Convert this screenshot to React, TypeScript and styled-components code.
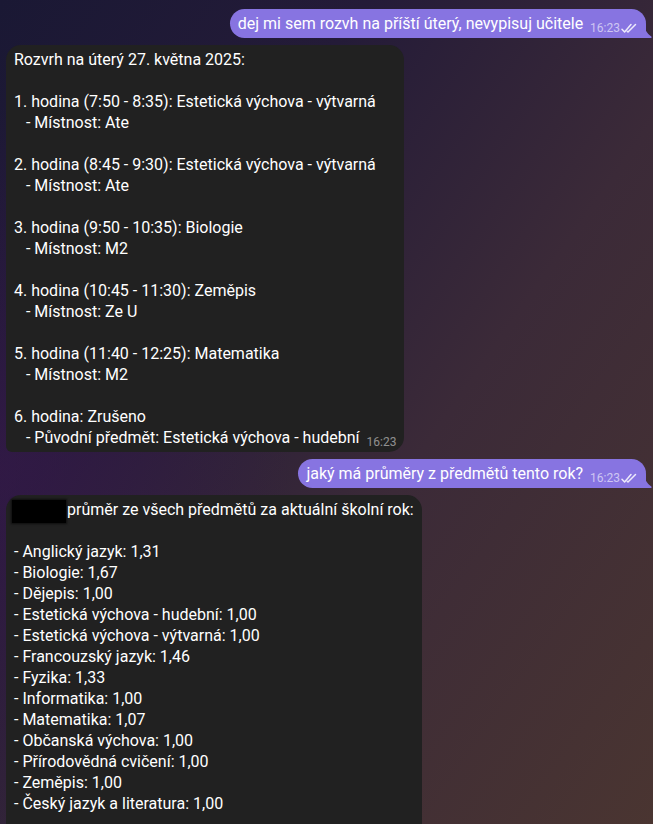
import React from "react";
import styled, { createGlobalStyle } from "styled-components";

const Global = createGlobalStyle`
  html, body { margin: 0; padding: 0; }
  body {
    width: 653px;
    height: 824px;
    overflow: hidden;
    font-family: Roboto, "Noto Sans", sans-serif;
    background:
      radial-gradient(ellipse 420px 520px at 0px 470px, rgba(60, 24, 80, 0.55), rgba(60,24,80,0) 70%),
      linear-gradient(125deg, #1a1834 0%, #241b38 30%, #3b2a38 60%, #4a3531 100%);
  }
`;

const Chat = styled.div`
  display: flex;
  flex-direction: column;
  gap: 7px;
  padding: 9px 7px 0 6px;
`;

const Row = styled.div<{ $out?: boolean }>`
  display: flex;
  justify-content: ${(p) => (p.$out ? "flex-end" : "flex-start")};
`;

const Bubble = styled.div<{ $out?: boolean }>`
  position: relative;
  background: ${(p) => (p.$out ? "#8774e1" : "#212121")};
  color: #ffffff;
  font-size: 16px;
  line-height: 21px;
  white-space: pre-wrap;
  padding: 4px 8px 4px 8px;
  border-radius: ${(p) => (p.$out ? "15px 15px 0 15px" : "15px 15px 15px 6px")};
`;

const Tail = styled.svg`
  position: absolute;
  right: -6px;
  bottom: 0;
  width: 9px;
  height: 17px;
`;

const Meta = styled.span<{ $out?: boolean }>`
  display: inline-flex;
  align-items: center;
  gap: 1px;
  margin-left: 7px;
  font-size: 12px;
  line-height: 12px;
  vertical-align: -3px;
  color: ${(p) => (p.$out ? "rgba(255,255,255,0.6)" : "rgba(255,255,255,0.5)")};
`;

const Checks = styled.svg`
  width: 17px;
  height: 11px;
`;

const Redacted = styled.span`
  display: inline-block;
  width: 54px;
  height: 23px;
  margin: -3px 1px -3px -2px;
  vertical-align: -5px;
  background: #000;
  box-shadow: 0 0 2px 1px rgba(0, 0, 0, 0.6);
`;

const DoubleCheck = () => (
  <Checks viewBox="0 0 17 11" fill="none" stroke="rgba(255,255,255,0.85)" strokeWidth="1.5" strokeLinecap="round" strokeLinejoin="round">
    <path d="M1 6.2 L3.6 9 L10 1.5" />
    <path d="M6.2 8.2 L7 9 L14.5 1.5" />
  </Checks>
);

const OutTail = () => (
  <Tail viewBox="0 0 9 17">
    <path
      d="M0 0 C0.3 3.6 1.2 6.8 2.8 9.6 C4.2 12.2 6.2 14.2 8.3 15.6 C8.9 16 8.7 17 8 17 H0 Z"
      fill="#8774e1"
    />
  </Tail>
);

const Time = ({ out }: { out?: boolean }) => (
  <Meta $out={out}>
    16:23
    {out && <DoubleCheck />}
  </Meta>
);

const schedule = `Rozvrh na úterý 27. května 2025:

1. hodina (7:50 - 8:35): Estetická výchova - výtvarná
   - Místnost: Ate

2. hodina (8:45 - 9:30): Estetická výchova - výtvarná
   - Místnost: Ate

3. hodina (9:50 - 10:35): Biologie
   - Místnost: M2

4. hodina (10:45 - 11:30): Zeměpis
   - Místnost: Ze U

5. hodina (11:40 - 12:25): Matematika
   - Místnost: M2

6. hodina: Zrušeno
   - Původní předmět: Estetická výchova - hudební`;

const averages = [
  "- Anglický jazyk: 1,31",
  "- Biologie: 1,67",
  "- Dějepis: 1,00",
  "- Estetická výchova - hudební: 1,00",
  "- Estetická výchova - výtvarná: 1,00",
  "- Francouzský jazyk: 1,46",
  "- Fyzika: 1,33",
  "- Informatika: 1,00",
  "- Matematika: 1,07",
  "- Občanská výchova: 1,00",
  "- Přírodovědná cvičení: 1,00",
  "- Zeměpis: 1,00",
  "- Český jazyk a literatura: 1,00",
];

export default function App() {
  return (
    <>
      <Global />
      <Chat>
        <Row $out>
          <Bubble $out>
            dej mi sem rozvh na příští úterý, nevypisuj učitele
            <Time out />
            <OutTail />
          </Bubble>
        </Row>
        <Row>
          <Bubble>
            {schedule}
            <Time />
          </Bubble>
        </Row>
        <Row $out>
          <Bubble $out>
            jaký má průměry z předmětů tento rok?
            <Time out />
            <OutTail />
          </Bubble>
        </Row>
        <Row>
          <Bubble>
            <Redacted />
            {"průměr ze všech předmětů za aktuální školní rok:\n\n"}
            {averages.join("\n")}
            {"\n\n"}
          </Bubble>
        </Row>
      </Chat>
    </>
  );
}
